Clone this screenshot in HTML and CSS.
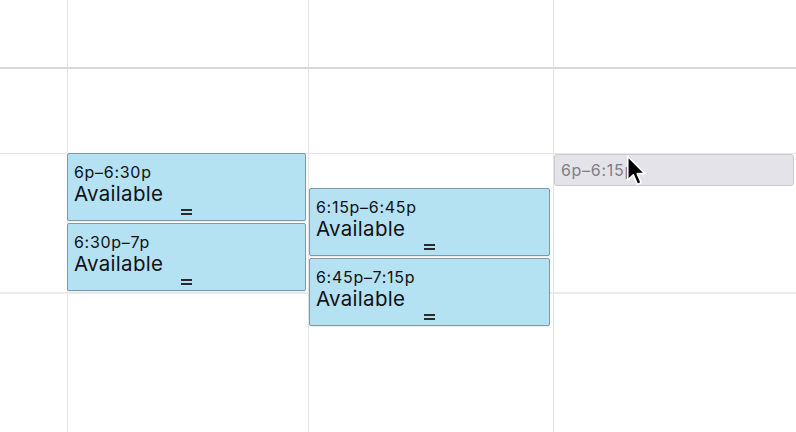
FILE: index.html
```html
<!DOCTYPE html>
<html>
<head>
<meta charset="utf-8">
<link rel="stylesheet" href="styles.css">
</head>
<body>
<div class="cal">
  <div class="grid">
    <div class="row r1"><div class="gutter"></div><div class="day d1"></div><div class="day d2"></div><div class="day d3"></div></div>
    <div class="row r2"><div class="gutter"></div><div class="day d1"></div><div class="day d2"></div><div class="day d3"></div></div>
    <div class="row r3"><div class="gutter"></div><div class="day d1"></div><div class="day d2"></div><div class="day d3"></div></div>
    <div class="row r4"><div class="gutter"></div><div class="day d1"></div><div class="day d2"></div><div class="day d3"></div></div>
  </div>
  <div class="events">
    <div class="gutter"></div>
    <div class="col d1">
      <div class="event" style="top:153px"><div class="time">6p–6:30p</div><div class="title">Available</div><div class="grip"></div></div>
      <div class="event" style="top:223px"><div class="time">6:30p–7p</div><div class="title">Available</div><div class="grip"></div></div>
    </div>
    <div class="col d2">
      <div class="event" style="top:188px"><div class="time">6:15p–6:45p</div><div class="title">Available</div><div class="grip"></div></div>
      <div class="event" style="top:258px"><div class="time">6:45p–7:15p</div><div class="title">Available</div><div class="grip"></div></div>
    </div>
    <div class="col d3">
      <div class="ghost" style="top:154px"><div class="time">6p–6:15p</div></div>
      <svg class="cursor" width="21" height="32" viewBox="0 0 14 22"><path d="M1 1 V17.2 L4.8 13.6 L7.6 20.2 L10.2 19.1 L7.5 12.8 H12.8 Z" fill="#000" stroke="#fff" stroke-width="1.1" stroke-linejoin="round"/></svg>
    </div>
  </div>
</div>
</body>
</html>
```

FILE: styles.css
```css
html, body {
  margin: 0;
  padding: 0;
  background: #ffffff;
}
body {
  font-family: "Inter", "DejaVu Sans", sans-serif;
  color: #111113;
  width: 796px;
  height: 432px;
  overflow: hidden;
}
.cal {
  position: relative;
  width: 796px;
  height: 432px;
}
.grid {
  display: flex;
  flex-direction: column;
  height: 432px;
}
.row {
  display: flex;
  box-sizing: border-box;
}
.r1 { height: 69px; border-bottom: 2px solid #d7d7de; }
.r2 { height: 85px; border-bottom: 1px solid #e6e6eb; }
.r3 { height: 140px; border-bottom: 2px solid #ebebee; }
.r4 { flex: 1; }
.gutter { width: 67px; flex: none; }
.day {
  box-sizing: border-box;
  border-left: 1px solid #e3e3e8;
}
.d1 { width: 241px; flex: none; }
.d2 { width: 245px; flex: none; }
.d3 { flex: 1; }
.events {
  position: absolute;
  inset: 0;
  display: flex;
}
.col {
  position: relative;
}
.event {
  position: absolute;
  left: 0;
  right: 2px;
  height: 68px;
  box-sizing: border-box;
  background: #b4e2f3;
  border: 1px solid #7c9ba7;
  border-radius: 2px;
  box-shadow: 0 1px 1px rgba(0,0,0,0.08);
  padding: 9px 6px 0;
}
.d2 .event { left: 1px; right: 3px; }
.time {
  font-size: 16px;
  line-height: 18px;
  letter-spacing: 0.7px;
  white-space: nowrap;
}
.title {
  font-size: 20.5px;
  line-height: 24px;
  letter-spacing: 0.3px;
  margin-top: 1px;
}
.grip {
  width: 11px;
  height: 2px;
  border-top: 2px solid #2a2a2c;
  border-bottom: 2px solid #2a2a2c;
  margin: 3px auto 0;
}
.ghost {
  position: absolute;
  left: 1px;
  right: 2px;
  height: 32px;
  box-sizing: border-box;
  background: #e3e3e9;
  border: 1px solid #cacad1;
  border-radius: 3px;
  padding: 6px 6px 0;
  color: #7e7e86;
}
.cursor {
  position: absolute;
  left: 73px;
  top: 155px;
}
```
